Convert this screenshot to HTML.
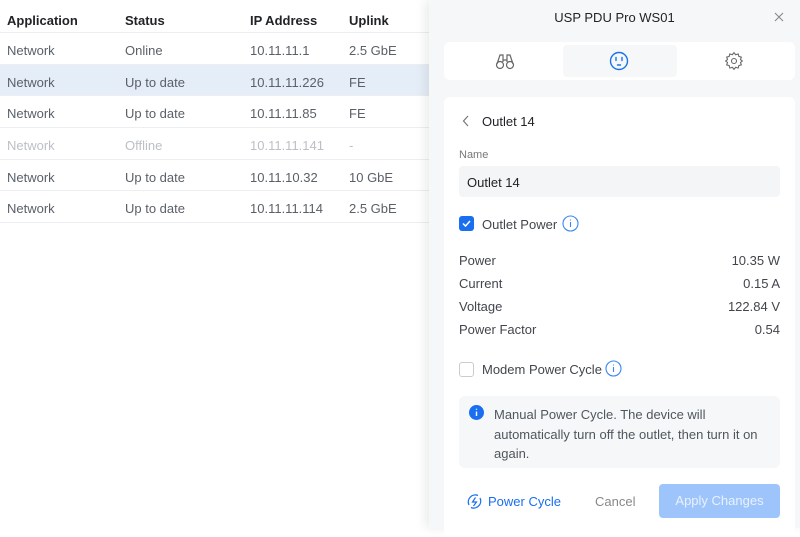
<!DOCTYPE html>
<html><head><style>
*{margin:0;padding:0;box-sizing:border-box}
body{width:800px;height:528px;overflow:hidden;background:#fff;font-family:"Liberation Sans",sans-serif;position:relative;color:#333}
.tbl{position:absolute;left:0;top:0;width:430px}
.row{height:31.7px;border-bottom:1px solid #eceef1;position:relative;font-size:13px;color:#5a6068}
.row span{position:absolute;top:10px}
.hd{height:33px;font-weight:bold;color:#212327}
.hd span{top:13px}
.sel{background:#e5edf8}
.off{color:#bcc0c6}
.c1{left:7px}.c2{left:125px}.c3{left:250px}.c4{left:349px}
.panel{position:absolute;left:429px;top:0;width:371px;height:528px;background:#f6f7f8;box-shadow:-4px 0 10px rgba(0,0,0,.08)}
.title{position:absolute;top:10px;left:0;width:100%;text-align:center;font-size:13px;color:#212327}
.tabs{position:absolute;left:15px;top:42px;width:351px;height:38px;background:#fff;border-radius:6px}
.tab2{position:absolute;left:119px;top:3px;width:114px;height:32px;background:#f6f7f8;border-radius:4px}
.card{position:absolute;left:15px;top:97px;width:351px;height:440px;background:#fff;border-radius:6px}
.a{position:absolute;font-size:13px;color:#42464c}
.inp{position:absolute;left:15px;top:69px;width:321px;height:31px;background:#f4f5f6;border-radius:4px;font-size:13px;padding:9px 8px;color:#212327}
.cb{position:absolute;width:15px;height:15px;border-radius:3px}
.info{position:absolute;left:15px;top:299px;width:321px;height:72px;background:#f6f7f8;border-radius:6px}
.btn{position:absolute;left:215px;top:387px;width:121px;height:34px;background:#9ec5fb;border-radius:4px;color:#e8f1ff;font-size:13px;text-align:center;line-height:34px}
</style></head><body>
<div class="tbl">
<div class="row hd"><span class="c1">Application</span><span class="c2">Status</span><span class="c3">IP Address</span><span class="c4">Uplink</span></div>
<div class="row"><span class="c1">Network</span><span class="c2">Online</span><span class="c3">10.11.11.1</span><span class="c4">2.5 GbE</span></div>
<div class="row sel"><span class="c1">Network</span><span class="c2">Up to date</span><span class="c3">10.11.11.226</span><span class="c4">FE</span></div>
<div class="row"><span class="c1">Network</span><span class="c2">Up to date</span><span class="c3">10.11.11.85</span><span class="c4">FE</span></div>
<div class="row off"><span class="c1">Network</span><span class="c2">Offline</span><span class="c3">10.11.11.141</span><span class="c4">-</span></div>
<div class="row"><span class="c1">Network</span><span class="c2">Up to date</span><span class="c3">10.11.10.32</span><span class="c4">10 GbE</span></div>
<div class="row"><span class="c1">Network</span><span class="c2">Up to date</span><span class="c3">10.11.11.114</span><span class="c4">2.5 GbE</span></div>
</div>
<div class="panel">
<div class="title">USP PDU Pro WS01</div>
<svg style="position:absolute;right:16px;top:12px" width="10" height="10" viewBox="0 0 10 10" stroke="#888" stroke-width="1.1"><path d="M1 1l8 8M9 1l-8 8"/></svg>
<div class="tabs">
<div class="tab2"></div>
<svg style="position:absolute;left:51px;top:10px" width="20" height="18" viewBox="0 0 20 18" fill="none" stroke="#666" stroke-width="1.2"><circle cx="5" cy="13" r="3.5"/><circle cx="15" cy="13" r="3.5"/><path d="M2 12 L5 3 H8 V10 M18 12 L15 3 H12 V10 M8 8 H12"/></svg>
<svg style="position:absolute;left:165px;top:9px" width="20" height="20" viewBox="0 0 20 20" fill="none" stroke="#1a73e8" stroke-width="1.4"><circle cx="10" cy="10" r="8.5"/><path d="M7 6.5v3M13 6.5v3M8.5 14h3" stroke-linecap="round"/></svg>
<svg style="position:absolute;left:280px;top:9px" width="20" height="20" viewBox="0 0 24 24" fill="none" stroke="#666" stroke-width="1.3"><circle cx="12" cy="12" r="3"/><path d="M12 2l2 2.5 3-1 .8 3 3 .8-1 3L22 12l-2.2 1.7 1 3-3 .8-.8 3-3-1L12 22l-2-2.5-3 1-.8-3-3-.8 1-3L2 12l2.2-1.7-1-3 3-.8.8-3 3 1z"/></svg>
</div>
<div class="card">
<svg style="position:absolute;left:18px;top:18px" width="8" height="12" viewBox="0 0 8 12" fill="none" stroke="#777" stroke-width="1.2"><path d="M6 1L1.5 6 6 11"/></svg>
<div class="a" style="left:38px;top:17px;color:#212327">Outlet 14</div>
<div class="a" style="left:15px;top:52px;font-size:11px;color:#777">Name</div>
<div class="inp">Outlet 14</div>
<div class="cb" style="left:15px;top:119px;background:#1a6ef0"><svg width="15" height="15" viewBox="0 0 15 15"><path d="M4 7.5l2.5 2.5 4.5-5" stroke="#fff" stroke-width="1.5" fill="none"/></svg></div>
<div class="a" style="left:38px;top:120px">Outlet Power</div>
<svg style="position:absolute;left:118px;top:118px" width="17" height="17" viewBox="0 0 17 17" fill="none" stroke="#3a86f0" stroke-width="1.1"><circle cx="8.5" cy="8.5" r="7.5"/><path d="M8.5 7v5M8.5 4.5v1"/></svg>
<div class="a" style="left:15px;top:156px">Power</div><div class="a" style="right:15px;top:156px">10.35 W</div>
<div class="a" style="left:15px;top:179px">Current</div><div class="a" style="right:15px;top:179px">0.15 A</div>
<div class="a" style="left:15px;top:202px">Voltage</div><div class="a" style="right:15px;top:202px">122.84 V</div>
<div class="a" style="left:15px;top:225px">Power Factor</div><div class="a" style="right:15px;top:225px">0.54</div>
<div class="cb" style="left:15px;top:265px;border:1px solid #ccc"></div>
<div class="a" style="left:38px;top:265px">Modem Power Cycle</div>
<svg style="position:absolute;left:161px;top:263px" width="17" height="17" viewBox="0 0 17 17" fill="none" stroke="#3a86f0" stroke-width="1.1"><circle cx="8.5" cy="8.5" r="7.5"/><path d="M8.5 7v5M8.5 4.5v1"/></svg>
<div class="info">
<svg style="position:absolute;left:10px;top:9px" width="15" height="15" viewBox="0 0 15 15"><circle cx="7.5" cy="7.5" r="7.5" fill="#1a6ef0"/><path d="M7.5 6.5v4.5M7.5 3.8v1" stroke="#fff" stroke-width="1.4"/></svg>
<div class="a" style="left:35px;top:9px;line-height:19.5px;width:280px;color:#50565e">Manual Power Cycle. The device will automatically turn off the outlet, then turn it on again.</div>
</div>
<svg style="position:absolute;left:22px;top:396px" width="17" height="17" viewBox="0 0 17 17" fill="none" stroke="#1a6ef0" stroke-width="1.3"><path d="M3 12A7 7 0 0 1 12 2.5M14 5a7 7 0 0 1-9 9.5"/><path d="M9.5 4.5L6.5 9h4l-3 4" stroke-width="1.2"/></svg>
<div class="a" style="left:44px;top:397px;color:#1a6ef0">Power Cycle</div>
<div class="a" style="left:151px;top:397px;color:#888">Cancel</div>
<div class="btn">Apply Changes</div>
</div>
</div>
</body></html>
